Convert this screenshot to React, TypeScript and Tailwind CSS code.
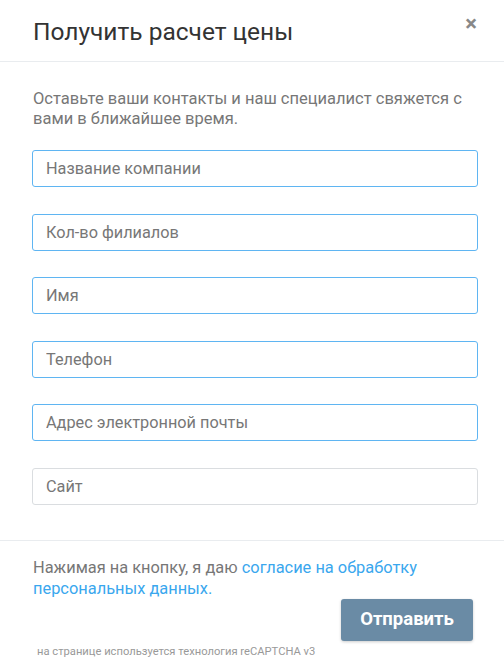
const fields = [
  { label: "Название компании", active: true },
  { label: "Кол-во филиалов", active: true },
  { label: "Имя", active: true },
  { label: "Телефон", active: true },
  { label: "Адрес электронной почты", active: true },
  { label: "Сайт", active: false },
];

export default function App() {
  return (
    <div className="w-[504px] min-h-[671px] bg-white font-['Roboto',sans-serif]">
      {/* Header */}
      <div className="flex h-[62px] items-start justify-between border-b border-[#e9ecef] pl-[33px] pr-[27px]">
        <h2 className="mt-[18px] text-[24.5px] leading-[28px] text-[#333]">Получить расчет цены</h2>
        <button className="mt-[13px] text-[22px] font-bold leading-[22px] text-[#888]">×</button>
      </div>

      {/* Body */}
      <div className="pl-[32px] pr-[26px] pt-[27px] pb-[35px]">
        <p className="pl-[1px] text-[16.5px] leading-[20px] text-[#777]">
          Оставьте ваши контакты и наш специалист свяжется с вами в ближайшее время.
        </p>
        <div className="mt-[21px] flex flex-col gap-[26.6px]">
          {fields.map((f) => (
            <input
              key={f.label}
              placeholder={f.label}
              className={
                "h-[37px] w-full rounded-[3px] border px-[13px] text-[16.3px] text-[#555] placeholder:text-[#777] outline-none " +
                (f.active ? "border-[#5fb5f2]" : "border-[#dadde0]")
              }
            />
          ))}
        </div>
      </div>

      {/* Footer */}
      <div className="border-t border-[#e9ecef] pl-[33px] pr-[31px] pt-[16px]">
        <p className="text-[16.4px] leading-[21px] text-[#777]">
          Нажимая на кнопку, я даю{" "}
          <a className="text-[#3aa7ee]">согласие на обработку персональных данных.</a>
        </p>
        <div className="flex justify-end">
          <button className="h-[42px] w-[132px] rounded-[3px] bg-[#6a8ba5] text-[18.5px] font-bold text-white shadow-[0_1px_3px_rgba(0,0,0,0.2)]">
            Отправить
          </button>
        </div>
        <p className="mt-[5px] pl-[4px] text-[11.2px] leading-[12px] text-[#999]">
          на странице используется технология reCAPTCHA v3
        </p>
      </div>
    </div>
  );
}
